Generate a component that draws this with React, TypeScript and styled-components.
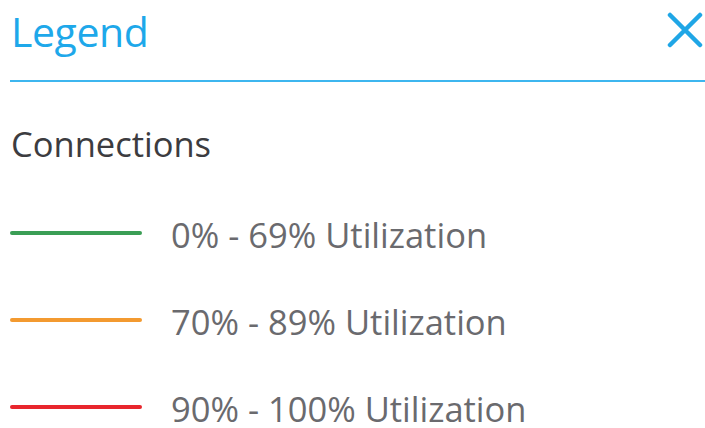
import React from 'react';
import styled, { createGlobalStyle } from 'styled-components';

const GlobalStyle = createGlobalStyle`
	html, body {
		margin: 0;
		padding: 0;
		background: #fff;
	}
	body {
		font-family: "Open Sans", "Noto Sans", sans-serif;
	}
`;

const Panel = styled.div`
	width: 705px;
	height: 428px;
	padding-left: 10px;
	box-sizing: border-box;
	overflow: hidden;
`;

const Header = styled.div`
	display: flex;
	align-items: flex-start;
	justify-content: space-between;
	height: 82px;
	padding-top: 11px;
	border-bottom: 2px solid #3db6ef;
	box-sizing: border-box;
`;

const Title = styled.h1`
	margin: 0 0 0 1px;
	font-size: 41px;
	font-weight: 400;
	line-height: 1;
	color: #1ea8ea;
	letter-spacing: -0.4px;
`;

const CloseButton = styled.button`
	display: flex;
	align-items: center;
	justify-content: center;
	width: 40px;
	height: 40px;
	margin: -1px 0 0 0;
	padding: 0;
	border: 0;
	background: none;
	cursor: pointer;
`;

const Section = styled.div`
	padding-top: 45px;
`;

const SectionTitle = styled.h2`
	margin: 0 0 56px 1px;
	font-size: 34.5px;
	font-weight: 400;
	color: #3c3c40;
	line-height: 1;
`;

const Items = styled.ul`
	list-style: none;
	margin: 0;
	padding: 0;
	display: flex;
	flex-direction: column;
	gap: 52px;
`;

const Item = styled.li`
	display: flex;
	align-items: center;
	gap: 29px;
	height: 35px;
`;

const Swatch = styled.span<{ $color: string }>`
	display: block;
	flex: none;
	width: 132px;
	height: 4px;
	border-radius: 2px;
	background: ${(p) => p.$color};
	margin-bottom: 5px;
`;

const Label = styled.span`
	font-size: 34.5px;
	color: #6a6a6e;
	line-height: 1;
	white-space: nowrap;
`;

const ranges = [
	{ color: '#3a9e55', label: '0% - 69% Utilization' },
	{ color: '#f39a30', label: '70% - 89% Utilization' },
	{ color: '#e8262d', label: '90% - 100% Utilization' },
];

export default function App() {
	return (
		<>
			<GlobalStyle />
			<Panel>
				<Header>
					<Title>Legend</Title>
					<CloseButton aria-label="Close">
						<svg width="36" height="36" viewBox="0 0 36 36">
							<path d="M3 3 L33 33 M33 3 L3 33" stroke="#1fa6e6" strokeWidth="4.5" strokeLinecap="round" />
						</svg>
					</CloseButton>
				</Header>
				<Section>
					<SectionTitle>Connections</SectionTitle>
					<Items>
						{ranges.map((r) => (
							<Item key={r.label}>
								<Swatch $color={r.color} />
								<Label>{r.label}</Label>
							</Item>
						))}
					</Items>
				</Section>
			</Panel>
		</>
	);
}
